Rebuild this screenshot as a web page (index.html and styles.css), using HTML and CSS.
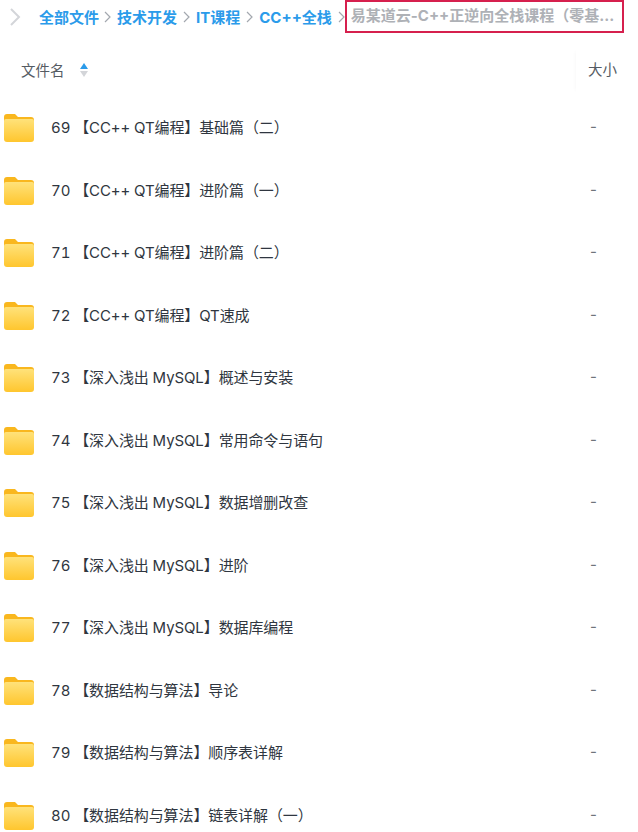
FILE: index.html
```html
<!DOCTYPE html>
<html lang="zh-CN">

<head>
    <meta charset="UTF-8">
    <title>全部文件</title>
    <link rel="stylesheet" href="styles.css">
</head>

<body>
    <div class="crumbs">
        <svg class="back" width="12" height="20" viewBox="0 0 12 20"><path d="M2 2l8 8-8 8" /></svg>
        <a class="crumb">全部文件</a>
        <svg class="sep sep-first" width="7" height="12" viewBox="0 0 7 12"><path d="M1 1l5 5-5 5" /></svg>
        <a class="crumb">技术开发</a>
        <svg class="sep" width="7" height="12" viewBox="0 0 7 12"><path d="M1 1l5 5-5 5" /></svg>
        <a class="crumb">IT课程</a>
        <svg class="sep" width="7" height="12" viewBox="0 0 7 12"><path d="M1 1l5 5-5 5" /></svg>
        <a class="crumb">CC++全栈</a>
        <svg class="sep" width="7" height="12" viewBox="0 0 7 12"><path d="M1 1l5 5-5 5" /></svg>
        <span class="current">易某道云-C++正逆向全栈课程（零基...</span>
    </div>

    <div class="head">
        <div class="head-name">
            <span>文件名</span>
            <span class="sort"><i class="up"></i><i class="down"></i></span>
        </div>
        <div class="head-size">大小</div>
    </div>

    <div class="list">
        <div class="row">
            <svg class="folder" viewBox="0 0 30 28"><use href="#folder" /></svg>
            <span class="name">69 【CC++ QT编程】基础篇（二）</span><span class="size">-</span>
        </div>
        <div class="row">
            <svg class="folder" viewBox="0 0 30 28"><use href="#folder" /></svg>
            <span class="name">70 【CC++ QT编程】进阶篇（一）</span><span class="size">-</span>
        </div>
        <div class="row">
            <svg class="folder" viewBox="0 0 30 28"><use href="#folder" /></svg>
            <span class="name">71 【CC++ QT编程】进阶篇（二）</span><span class="size">-</span>
        </div>
        <div class="row">
            <svg class="folder" viewBox="0 0 30 28"><use href="#folder" /></svg>
            <span class="name">72 【CC++ QT编程】QT速成</span><span class="size">-</span>
        </div>
        <div class="row">
            <svg class="folder" viewBox="0 0 30 28"><use href="#folder" /></svg>
            <span class="name">73 【深入浅出 MySQL】概述与安装</span><span class="size">-</span>
        </div>
        <div class="row">
            <svg class="folder" viewBox="0 0 30 28"><use href="#folder" /></svg>
            <span class="name">74 【深入浅出 MySQL】常用命令与语句</span><span class="size">-</span>
        </div>
        <div class="row">
            <svg class="folder" viewBox="0 0 30 28"><use href="#folder" /></svg>
            <span class="name">75 【深入浅出 MySQL】数据增删改查</span><span class="size">-</span>
        </div>
        <div class="row">
            <svg class="folder" viewBox="0 0 30 28"><use href="#folder" /></svg>
            <span class="name">76 【深入浅出 MySQL】进阶</span><span class="size">-</span>
        </div>
        <div class="row">
            <svg class="folder" viewBox="0 0 30 28"><use href="#folder" /></svg>
            <span class="name">77 【深入浅出 MySQL】数据库编程</span><span class="size">-</span>
        </div>
        <div class="row">
            <svg class="folder" viewBox="0 0 30 28"><use href="#folder" /></svg>
            <span class="name">78 【数据结构与算法】导论</span><span class="size">-</span>
        </div>
        <div class="row">
            <svg class="folder" viewBox="0 0 30 28"><use href="#folder" /></svg>
            <span class="name">79 【数据结构与算法】顺序表详解</span><span class="size">-</span>
        </div>
        <div class="row">
            <svg class="folder" viewBox="0 0 30 28"><use href="#folder" /></svg>
            <span class="name">80 【数据结构与算法】链表详解（一）</span><span class="size">-</span>
        </div>
    </div>

    <svg class="defs" width="0" height="0">
        <defs>
            <linearGradient id="folder-front" x1="0" y1="0" x2="0" y2="1">
                <stop offset="0" stop-color="#ffe27a" />
                <stop offset="1" stop-color="#ffc62e" />
            </linearGradient>
            <g id="folder">
                <path d="M0 3a3 3 0 0 1 3-3h8l3 3h13a3 3 0 0 1 3 3v5H0z" fill="#f9b71e" />
                <path d="M0 7a2 2 0 0 1 2-2h26a2 2 0 0 1 2 2v18a3 3 0 0 1-3 3H3a3 3 0 0 1-3-3z" fill="url(#folder-front)" />
            </g>
        </defs>
    </svg>
</body>

</html>
```

FILE: styles.css
```css
html,
body {
    height: 100%;
}

body {
    margin: 0;
    overflow: hidden;
    background-color: #fff;
    font-family: Inter, "Noto Sans CJK SC", sans-serif;
    color: #2f3640;
}

.defs {
    position: absolute;
}

.crumbs {
    display: flex;
    align-items: center;
    height: 33px;
    padding-left: 9px;
    font-size: 15px;
    font-weight: 700;
    white-space: nowrap;
}

.crumbs svg {
    flex: none;
    fill: none;
}

.back {
    margin-right: 18px;
    stroke: #d3d5d9;
    stroke-width: 2;
}

.sep {
    margin: 0 6px 0 6px;
    stroke: #a3a8af;
    stroke-width: 1.2;
}

.sep-first {
    margin-left: 5px;
}

.crumb {
    color: #2b9bea;
}

.current {
    box-sizing: border-box;
    width: 279px;
    height: 33px;
    margin-left: -6px;
    padding-left: 4px;
    line-height: 28px;
    color: #aeb1b6;
    border: 2px solid #d6204e;
    white-space: nowrap;
    overflow: hidden;
}

.head {
    display: flex;
    align-items: center;
    height: 44px;
    margin-top: 16px;
    padding-bottom: 2px;
    font-size: 14.5px;
    color: #555b63;
}

.head-name {
    flex: 1;
    display: flex;
    align-items: center;
    gap: 15px;
    padding-bottom: 3px;
    padding-left: 21px;
}

.sort {
    display: flex;
    flex-direction: column;
    gap: 2px;
}

.sort i {
    width: 0;
    height: 0;
    border-left: 4.5px solid transparent;
    border-right: 4.5px solid transparent;
}

.sort .up {
    border-bottom: 6px solid #2b9bea;
}

.sort .down {
    border-top: 6px solid #d3d5d9;
}

.head-size {
    width: 50px;
    height: 44px;
    padding-left: 12px;
    line-height: 42px;
    box-shadow: -3px 0 4px -3px #f4f4f4;
}

.list {
    margin-top: 2px;
}

.row {
    display: flex;
    align-items: center;
    height: 62.5px;
    padding-left: 4px;
    font-size: 15px;
}

.folder {
    flex: none;
    width: 30px;
    height: 28px;
    margin-right: 17px;
}

.name {
    flex: 1;
    padding-bottom: 3px;
    font-variant-numeric: tabular-nums;
    letter-spacing: -0.1px;
    white-space: nowrap;
}

.size {
    width: 48px;
    padding-bottom: 3px;
    color: #6f747b;
    font-size: 15px;
}
```
